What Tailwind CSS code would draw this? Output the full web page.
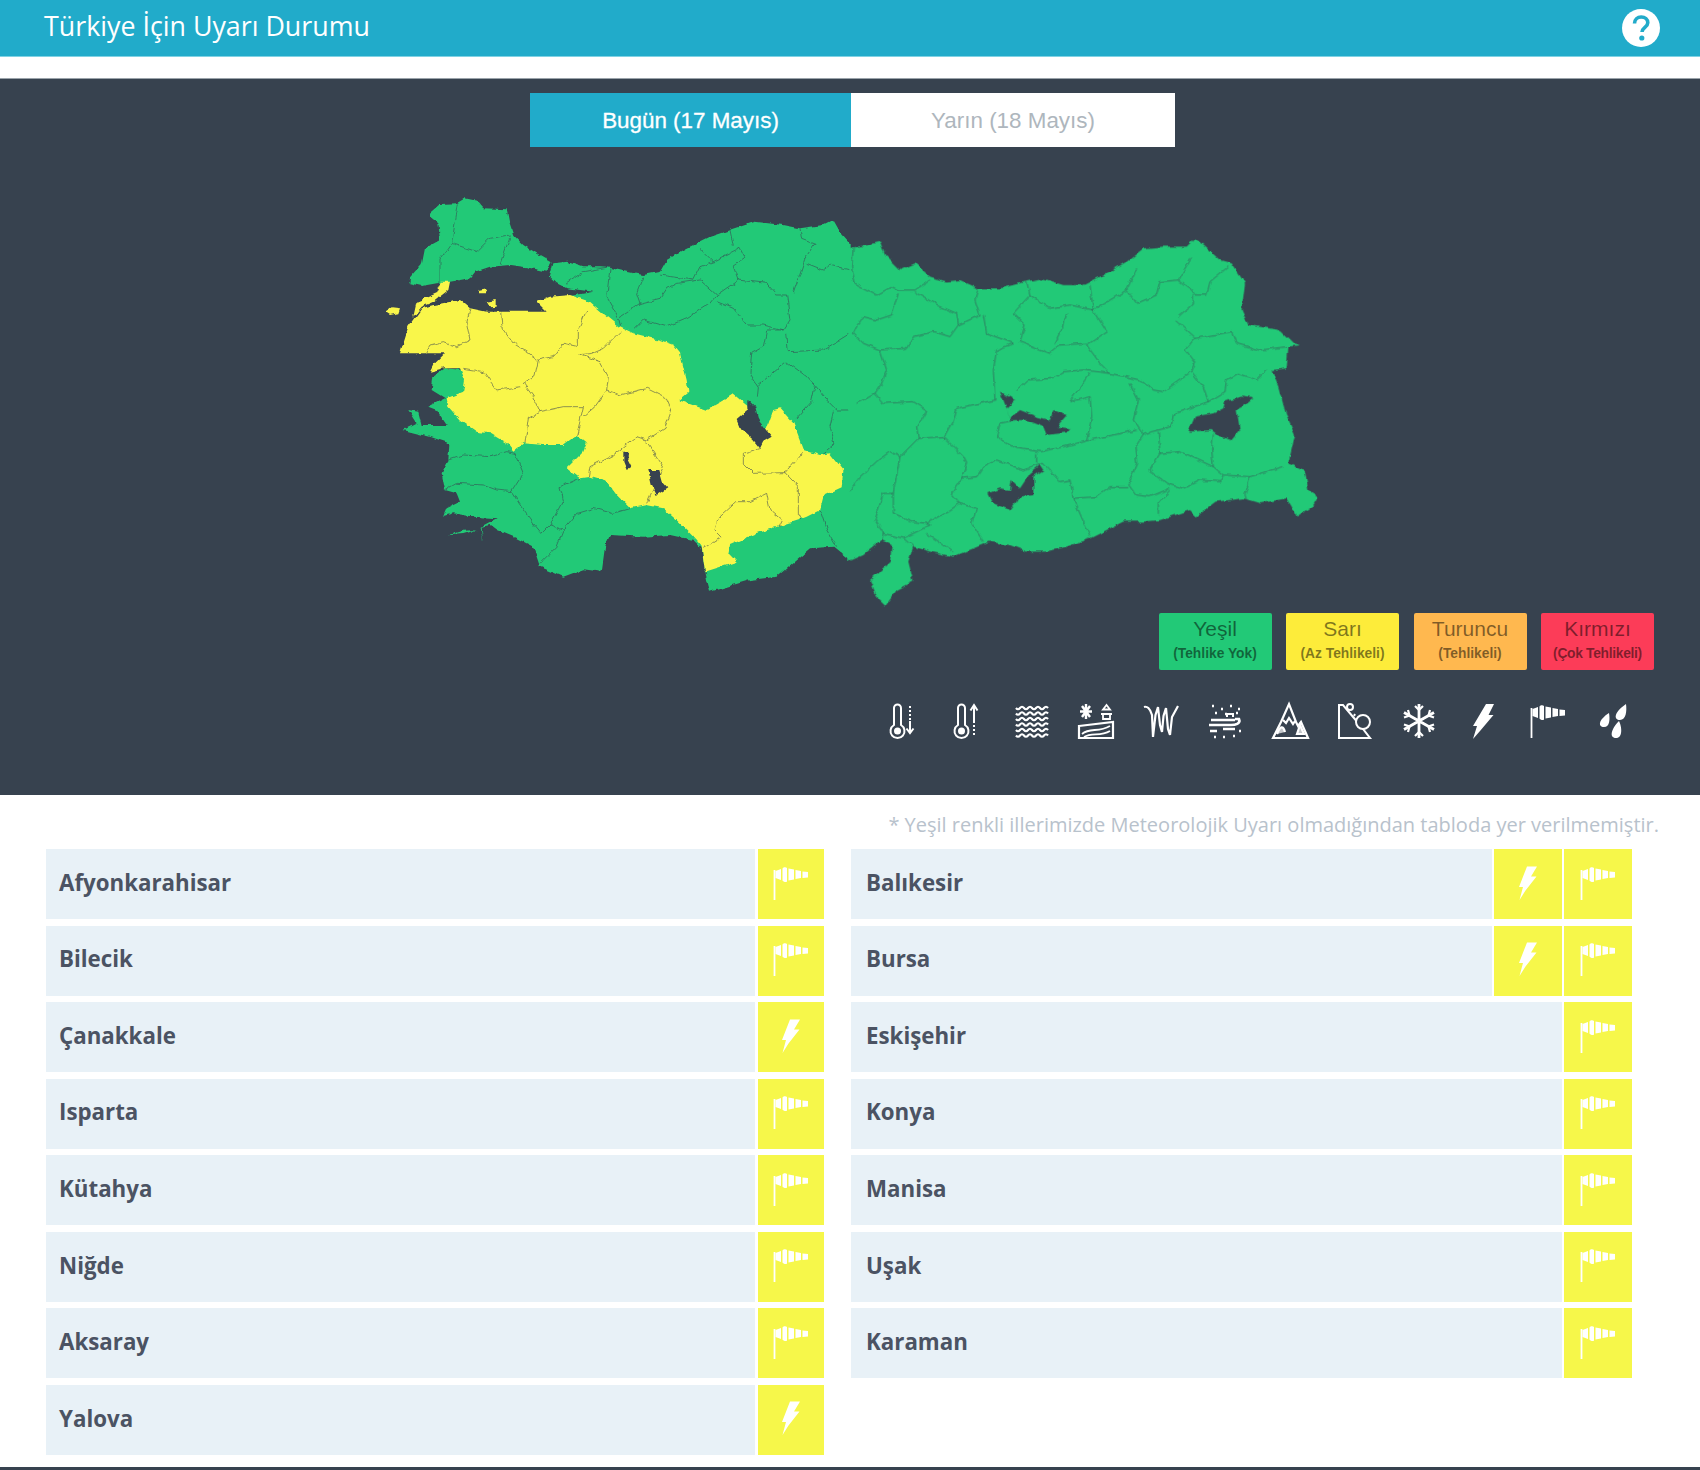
<!DOCTYPE html>
<html lang="tr">

<head>
  <meta charset="UTF-8">
  <title>Türkiye İçin Uyarı Durumu</title>
  <script src="https://cdn.jsdelivr.net/npm/@tailwindcss/browser@4"></script>
</head>

<body class="bg-white font-['Open_Sans',sans-serif]">
  <!-- shared icons -->
  <svg class="hidden">
    <defs>
      <symbol id="wind" viewBox="0 0 36 34">
        <path d="M1.500 34V4" fill="none" stroke="#fff" stroke-width="1.800" />
        <path d="M2.500 5L8 3V14L2.500 12ZM9.500 2.500C10.500 1 13 1 14 2V15.500C13 16.500 10.500 16 9.500 14.500ZM15.500 2.500L21 3.500V13.500L15.500 14.500ZM22.500 4L28 5V12L22.500 13ZM29.500 5.500L35 6V11.500L29.500 12Z" fill="#fff" />
      </symbol>
      <symbol id="bolt" viewBox="0 0 18 34">
        <path d="M8 .5H18L12 10.500H17.500L6.500 24.500L.5 34L4 21H0Z" fill="#fff" />
      </symbol>
      <filter id="rough" filterUnits="userSpaceOnUse" x="350" y="180" width="1000" height="430">
        <feTurbulence type="fractalNoise" baseFrequency=".13" numOctaves="2" seed="4" />
        <feDisplacementMap in="SourceGraphic" scale="5" xChannelSelector="R" yChannelSelector="G" />
      </filter>
    </defs>
  </svg>

  <header class="h-[57px] bg-[#21abca] flex items-center justify-between pl-[44px] pr-[40px] border-b border-[#7fd2e4]">
    <h1 class="text-[26.800px] -mt-[4px] text-white">Türkiye İçin Uyarı Durumu</h1>
    <svg class="w-[38px] h-[38px]" viewBox="0 0 38 38">
      <circle cx="19" cy="19" r="19" fill="#fff" />
      <path d="M12.500 14.500C12.500 10.500 15.500 8 19.200 8C23 8 25.800 10.300 25.800 13.800C25.800 18.300 20 18.500 20 23" fill="none" stroke="#21abca" stroke-width="3.600" />
      <circle cx="19.800" cy="29" r="2.600" fill="#21abca" />
    </svg>
  </header>

  <section class="mt-[21px] h-[717px] bg-[#37424f] border-t border-[#9aa3aa]">
    <div class="mt-[14px] ml-[530px] w-[645px] h-[54px] flex font-['Liberation_Sans',sans-serif] text-[22.400px]">
      <div class="w-[321px] pt-[2px] bg-[#21abca] text-white flex items-center justify-center [-webkit-text-stroke:0.3px_white]">Bugün (17 Mayıs)</div>
      <div class="flex-1 pt-[2px] bg-white text-[#aeb6bd] flex items-center justify-center">Yarın (18 Mayıs)</div>
    </div>

    <!-- map: each half is drawn in its own 3x tracing grid -->
    <svg class="block mt-[33px] ml-[350px] blur-[0.4px]" width="1000" height="430" viewBox="350 180 1000 430">
      <g filter="url(#rough)">
      <g transform="translate(350 180) scale(.33333)">
        <!-- thrace -->
        <path fill="#22c977" d="M240 98L270 72L320 70L345 55L380 62L400 85L470 88L478 130L490 165L520 195L560 220L605 245L590 275L530 262L480 255L420 260L375 275L360 295L300 305L260 310L215 318L178 310L180 295L215 255L225 205L270 180L265 130L240 110Z" />
        <!-- anatolia, west half -->
        <path fill="#22c977" d="M610 250L650 245L700 262L770 262L830 275L880 285L930 275L950 240L1010 205L1080 170L1140 150L1215 125L1300 135L1350 145L1420 135L1450 120L1470 155L1505 195L1505 1145L1450 1100L1380 1105L1280 1190L1200 1200L1080 1235L1065 1175L1055 1105L1030 1080L960 1065L880 1070L780 1065L765 1100L755 1175L700 1168L640 1190L570 1160L550 1100L500 1075L440 1050L420 1035L395 1040L398 1085L392 1040L440 1015L370 1010L310 1000L280 1008L290 985L330 965L320 940L285 930L275 880L295 840L298 790L240 770L160 750L200 730L175 690L205 695L215 735L290 735L260 690L235 680L285 655L245 630L250 590L285 565L340 570L500 500L650 400L700 368L660 348L730 335L650 325L620 310L600 290Z" />
        <path fill="#22c977" d="M296 1066L340 1052L380 1050L340 1062Z" />
        <!-- yellow provinces -->
        <path fill="#f9f64a" d="M720 365L760 400L810 440L850 460L930 480L970 495L990 520L1000 560L1010 600L1015 635L985 660L1070 690L1130 655L1150 642L1195 680L1230 800L1270 690L1290 685L1330 730L1360 810L1410 825L1440 820L1480 870L1475 925L1420 950L1410 990L1370 1010L1345 1020L1220 1060L1140 1095L1135 1120L1160 1145L1065 1175L1055 1100L1030 1070L990 1030L940 985L890 975L840 985L800 945L770 905L720 890L690 895L650 865L700 815L710 790L680 765L640 795L580 795L520 790L490 815L470 790L420 760L380 755L330 720L295 680L290 655L340 635L345 600L330 565L280 565L240 575L250 555L285 520L150 520L175 440L215 385L250 375L330 360L360 385L410 395L590 395L560 365L600 350L660 345Z" />
        <path fill="#f9f64a" d="M190 410L200 365L260 340L275 305L300 305L295 330L250 365L215 380ZM105 395L125 382L150 385L145 400L120 405ZM385 330L410 325L405 340L390 340ZM410 365L440 360L440 380L420 382Z" />
        <!-- lakes -->
        <path fill="#37424f" d="M1195 660L1215 680L1225 720L1265 770L1240 785L1230 805L1210 780L1170 745L1160 720L1195 690ZM895 870L925 870L935 905L952 925L920 945L905 915ZM820 815L835 815L832 835L845 860L830 870L820 845Z" />
        <!-- province lines -->
        <path fill="none" stroke="#37424f" stroke-opacity=".55" stroke-width="3" stroke-linejoin="round" d="M360 385L350 430L360 480L320 500L280 485L240 495L225 520M455 395L460 450L490 490L530 515L565 540L555 590L520 610M710 390L685 450L685 500L640 490L610 530L565 540M810 455L760 505L725 520L685 525M690 525L750 545L775 590L770 630M770 630L810 645L890 625L950 655M520 610L550 650L570 695L640 680L700 680M340 565L400 575L440 630L515 620M570 695L535 715L525 790M700 680L685 745L680 765M770 630L735 680L700 710M950 655L965 690L945 745L890 780L860 770L790 825L720 860L715 890M890 785L940 860L890 970M1230 805L1180 820L1180 850L1210 880L1305 878L1355 820M1305 878L1345 920L1345 1000L1355 1020M1060 1105L1115 1070L1095 1050L1105 1015L1160 965L1200 965L1250 940L1260 990L1295 1020L1285 1040" />
        <path fill="none" stroke="#37424f" stroke-opacity=".55" stroke-width="3" stroke-linejoin="round" d="M325 70L315 130L305 190L270 240L270 310M305 190L380 215L420 175L480 165M480 170L450 255M650 310L700 275L770 262M780 265L770 350L810 420L815 440M880 290L860 340L870 370L810 410M870 370L930 355L950 325L980 310M930 285L1030 300L1050 260L1090 245L1050 205M980 310L1050 300L1100 345M1100 345L1080 370L1010 415L950 440L880 420L850 450M1090 245L1170 205L1185 235L1150 260L1165 300L1100 345M1140 150L1150 200M1165 300L1250 310L1280 345L1310 345L1320 420L1300 450M1100 365L1150 385L1190 435L1240 435L1300 450M1350 145L1355 175L1395 190L1365 235L1330 340M1370 250L1420 270L1440 255L1500 270M1300 450L1250 450L1240 500L1205 520L1200 580L1225 620L1222 650M1315 515L1420 510L1500 460M1315 515L1310 460M1225 615L1310 545L1370 590L1430 660L1460 690L1500 690M1395 620L1385 665L1335 720M1450 695L1440 740L1455 790L1420 820M295 840L340 825L420 830L470 815L495 820M495 820L520 880L485 935L440 930L400 915L320 910L285 930M485 935L520 990L550 1030L575 1060L600 1035L640 960L630 920L690 895M600 1035L640 1050L680 1000L730 985L790 1000L840 985M640 1050L620 1100L570 1150M1065 1175L1075 1230M1410 990L1430 1050L1460 1100" />
      </g>
      <g transform="translate(850 200) scale(.33333)">
        <!-- anatolia, east half -->
        <path fill="#22c977" d="M-5 145L50 135L90 125L105 165L150 210L195 190L240 230L290 245L330 240L385 265L450 265L530 245L575 235L640 255L700 255L760 225L830 185L880 145L940 140L1010 140L1035 115L1060 135L1110 180L1145 190L1185 250L1175 330L1195 375L1290 390L1330 430L1350 435L1315 440L1310 505L1265 510L1285 560L1310 650L1335 705L1315 790L1365 815L1375 870L1405 890L1390 915L1340 950L1325 920L1310 895L1230 910L1180 895L1100 905L1040 950L1020 930L930 960L880 965L820 965L720 1015L650 1040L590 1055L530 1055L480 1035L420 1025L310 1070L240 1055L190 1040L175 1085L190 1145L140 1170L105 1220L85 1200L60 1140L120 1085L125 1035L95 1020L40 1065L-5 1085Z" />
        <!-- dam lakes and van -->
        <path fill="#37424f" d="M450 575L495 600L470 625L478 655L510 630L560 650L600 660L610 630L650 645L620 680L660 685L655 697L590 705L580 680L530 660L480 660L470 625ZM1015 695L1035 650L1090 640L1120 625L1125 605L1175 590L1210 595L1180 620L1160 630L1170 690L1145 720L1110 710L1085 690ZM415 880L450 865L480 870L485 840L510 865L540 820L570 795L580 810L550 830L550 885L510 890L480 930L430 910Z" />
        <!-- province lines -->
        <path fill="none" stroke="#37424f" stroke-opacity=".55" stroke-width="3" stroke-linejoin="round" d="M10 140L5 200L15 250L80 285L125 260L145 270L195 270L240 240M145 280L125 345L80 360L40 350L20 380L10 400M195 275L260 315L320 340L325 375L390 345L375 300L385 265M10 400L40 430L90 450L170 445L190 410L250 395L300 410L325 375M90 450L110 510L95 550L75 580L20 610M75 580L100 610L190 605L230 630L200 680L205 715L150 770M205 715L280 710L340 770L350 790L335 835M400 345L410 400L490 430L440 450L430 510L435 600L320 625L310 665L280 720M530 245L540 285L490 340L525 375L510 425L600 460L630 435L710 430M540 285L600 325L660 315L730 330M720 255L730 330L770 395L710 435L750 490L780 520M650 340L640 380L615 430M730 330L830 270L860 310L920 285L930 245L985 240L1025 170M860 205L830 270M985 240L1025 270L1035 285L1070 285L1080 245L1135 200M985 350L1030 310L1030 285M975 360L1035 415L1145 395L1160 430L1230 450L1310 440M1035 415L1005 450L1035 490L1025 515L940 575L910 570L870 540L780 520L700 510L640 515L610 535L530 540L500 570M1025 515L1060 560L1075 605L975 640L965 680L905 695L880 705L850 660L865 600L840 550M1075 605L1125 575L1130 540L1165 520L1220 540L1250 510M1090 700L1085 750L1090 800L1120 825L1200 830L1300 800M720 520L670 590L660 605L720 590L725 650L710 720M1200 830L1185 885L1190 900M1120 825L1110 845L1050 840L1000 865L950 850L900 810L930 760L990 755L1090 800M925 695L930 760M880 705L855 745L860 790L835 850L860 885L900 890L960 865M960 870L925 910L925 945M835 860L780 860L740 890L670 895L720 1010M670 895L660 840L630 845L580 790M580 790L520 810L440 780L400 800L380 830L335 835L305 880L330 910L300 930L230 970L190 965L130 940L130 880L150 770M860 690L720 720L620 745L570 755L500 745L440 710L450 670L495 660M560 760L560 790M330 910L380 925L365 970L400 1025M230 1000L310 1055M230 970L240 975L160 1015L100 1000L75 960L100 880L130 880M160 1015L190 1040M100 1000L95 1020M150 770L120 755L85 780L30 830L0 870" />
      </g>
      </g>
    </svg>

    <!-- legend -->
    <div class="mt-[3px] pr-[46px] flex justify-end gap-[14.500px] font-['Liberation_Sans',sans-serif] text-center text-black/50">
      <div class="w-[113px] h-[57px] rounded-[2px] bg-[#22c977] pt-[4px]">
        <p class="text-[21px] leading-[24px]">Yeşil</p>
        <p class="text-[13.800px] leading-[26px] font-bold">(Tehlike Yok)</p>
      </div>
      <div class="w-[113px] h-[57px] rounded-[2px] bg-[#fdec3a] pt-[4px]">
        <p class="text-[21px] leading-[24px]">Sarı</p>
        <p class="text-[13.800px] leading-[26px] font-bold">(Az Tehlikeli)</p>
      </div>
      <div class="w-[113px] h-[57px] rounded-[2px] bg-[#ffb84f] pt-[4px]">
        <p class="text-[21px] leading-[24px]">Turuncu</p>
        <p class="text-[13.800px] leading-[26px] font-bold">(Tehlikeli)</p>
      </div>
      <div class="w-[113px] h-[57px] rounded-[2px] bg-[#fc3c58] pt-[4px]">
        <p class="text-[21px] leading-[24px]">Kırmızı</p>
        <p class="text-[13.800px] leading-[26px] font-bold tracking-[-0.3px]">(Çok Tehlikeli)</p>
      </div>
    </div>

    <!-- warning types -->
    <div class="mt-[31px] pr-[68px] flex justify-end gap-[24.500px] blur-[0.4px] text-white">
      <svg class="w-10 h-10" viewBox="0 0 40 40" fill="none" stroke="currentColor" stroke-width="2">
        <path d="M11 7a3.500 3.500 0 0 1 7 0V24a7 7 0 1 1-7 0Z" />
        <circle cx="14.500" cy="30" r="3.500" fill="currentColor" stroke="none" />
        <path d="M27 5V20" stroke-dasharray="2 2" />
        <path d="M27 20V31M23.500 27.500L27 32L30.500 27.500" />
      </svg>
      <svg class="w-10 h-10" viewBox="0 0 40 40" fill="none" stroke="currentColor" stroke-width="2">
        <path d="M11 7a3.500 3.500 0 0 1 7 0V24a7 7 0 1 1-7 0Z" />
        <circle cx="14.500" cy="30" r="3.500" fill="currentColor" stroke="none" />
        <path d="M27 20V34" stroke-dasharray="2 2" />
        <path d="M27 20V5M23.500 9.500L27 4L30.500 9.500" />
      </svg>
      <svg class="w-10 h-10" viewBox="0 0 40 40" fill="none" stroke="currentColor" stroke-width="2.200">
        <path d="M4 7q2 2.500 4 0t4 0t4 0t4 0t4 0t4 0t4 0t4 0M4 12.500q2 2.500 4 0t4 0t4 0t4 0t4 0t4 0t4 0t4 0M4 18q2 2.500 4 0t4 0t4 0t4 0t4 0t4 0t4 0t4 0M4 23.500q2 2.500 4 0t4 0t4 0t4 0t4 0t4 0t4 0t4 0M4 29q2 2.500 4 0t4 0t4 0t4 0t4 0t4 0t4 0t4 0M4 34.500q2 2.500 4 0t4 0t4 0t4 0t4 0t4 0t4 0t4 0" />
      </svg>
      <svg class="w-10 h-10" viewBox="0 0 40 40" fill="none" stroke="currentColor" stroke-width="1.800">
        <path d="M3 25L37 21V37H3Z" stroke-width="2.200" />
        <path d="M6 33C14 26 22 32 34 25M8 36C16 31 24 36 34 30" />
        <path d="M6 5L14 16M14 5L6 16M10 3V18M4 10.500H16" stroke-width="2.400" />
        <path d="M25 13H36M27 13V18H34V13M30.500 4L27 8.500H34Z" />
      </svg>
      <svg class="w-10 h-10" viewBox="0 0 40 40" fill="none" stroke="currentColor" stroke-width="2.200">
        <path d="M3 6C6 5 9 7 11 14L12 36L14.500 14L17 6L19 24L21 31L22.500 15L25 7L27 28L29 34L31 16L37 5" />
      </svg>
      <svg class="w-10 h-10" viewBox="0 0 40 40" fill="none" stroke="currentColor" stroke-width="2">
        <path d="M6 19H30M4 24H26C30 24 36 23 34 18H30" stroke-width="2.600" />
        <path d="M5 30H12M18 28H30M7 5H9M16 8H18M25 5H27M33 8H35M10 12H12M20 13H22M31 12H33M9 36H11M18 36H20M28 35H30M34 30H36" stroke-width="2.600" />
        <path d="M22 16V13H28V16" />
      </svg>
      <svg class="w-10 h-10" viewBox="0 0 40 40" fill="none" stroke="currentColor" stroke-width="2.200">
        <path d="M3 37L11 21L19 3L26 21L28 25L31 21L38 37Z" />
        <path d="M13 19L16 22L19 17L23 23L25 20" />
        <path d="M7 33C10 25 13 24 15 31" fill="currentColor" fill-opacity=".7" />
        <path d="M27 33L30 24L34 33Z" fill="currentColor" fill-opacity=".7" />
      </svg>
      <svg class="w-10 h-10" viewBox="0 0 40 40" fill="none" stroke="currentColor" stroke-width="2">
        <path d="M5 4V37H36L25 23L9 4Z" />
        <circle cx="29" cy="21" r="7" fill="#37424f" />
        <circle cx="16" cy="6" r="3" />
        <path d="M21 13L20 15" />
      </svg>
      <svg class="w-10 h-10" viewBox="0 0 40 40" fill="none" stroke="currentColor" stroke-width="2.200">
        <path d="M20 3V37M5 11.500L35 28.500M35 11.500L5 28.500" stroke-width="2.800" />
        <path d="M16 5L20 9L24 5M16 35L20 31L24 35M5 16.500L10.500 14.500L9 9M35 23.500L29.500 25.500L31 31M35 16.500L29.500 14.500L31 9M5 23.500L10.500 25.500L9 31" />
      </svg>
      <svg class="w-10 h-10" viewBox="0 0 40 40">
        <path d="M23 3H31L25.500 14H30.500L17 30L10 38L14 25H10Z" fill="currentColor" />
      </svg>
      <svg class="w-10 h-10" viewBox="0 0 40 40">
        <use href="#wind" x="2" y="3" width="36" height="34" />
      </svg>
      <svg class="w-10 h-10" viewBox="0 0 40 40" fill="currentColor">
        <path d="M34 3C35 10 34 19 28 19C22 19 21 12 34 3ZM17 12C18 18 18 26 12 26C6 26 6 19 17 12ZM27 20C30 26 31 37 24 37C17 37 19 28 27 20Z" />
      </svg>
    </div>
  </section>

  <p class="pt-[16px] h-[54px] pr-[41px] text-right text-[20px] leading-[28px] text-[#b8c2cc]">* Yeşil renkli illerimizde Meteorolojik Uyarı olmadığından tabloda yer verilmemiştir.</p>

  <div class="ml-[46px] grid grid-cols-[778px_781px] gap-x-[27px] gap-y-[6.570px] auto-rows-[70px] text-[22.300px] font-bold text-[#4b5363]">
    <div class="flex gap-[3px]">
      <div class="flex-1 bg-[#e8f1f7] flex items-center pl-[13px] pb-[3px]">Afyonkarahisar</div>
      <div class="w-[66px] bg-[#f6f74a] flex items-center justify-center"><svg class="w-[36px] h-[34px] -mt-[3px]"><use href="#wind" /></svg></div>
    </div>
    <div class="flex gap-[2px]">
      <div class="flex-1 bg-[#e8f1f7] flex items-center pl-[15px] pb-[3px]">Balıkesir</div>
      <div class="w-[68px] bg-[#f6f74a] flex items-center justify-center"><svg class="w-[18px] h-[34px] -mt-[3px]"><use href="#bolt" /></svg></div>
      <div class="w-[68px] bg-[#f6f74a] flex items-center justify-center"><svg class="w-[36px] h-[34px] -mt-[3px]"><use href="#wind" /></svg></div>
    </div>
    <div class="flex gap-[3px]">
      <div class="flex-1 bg-[#e8f1f7] flex items-center pl-[13px] pb-[3px]">Bilecik</div>
      <div class="w-[66px] bg-[#f6f74a] flex items-center justify-center"><svg class="w-[36px] h-[34px] -mt-[3px]"><use href="#wind" /></svg></div>
    </div>
    <div class="flex gap-[2px]">
      <div class="flex-1 bg-[#e8f1f7] flex items-center pl-[15px] pb-[3px]">Bursa</div>
      <div class="w-[68px] bg-[#f6f74a] flex items-center justify-center"><svg class="w-[18px] h-[34px] -mt-[3px]"><use href="#bolt" /></svg></div>
      <div class="w-[68px] bg-[#f6f74a] flex items-center justify-center"><svg class="w-[36px] h-[34px] -mt-[3px]"><use href="#wind" /></svg></div>
    </div>
    <div class="flex gap-[3px]">
      <div class="flex-1 bg-[#e8f1f7] flex items-center pl-[13px] pb-[3px]">Çanakkale</div>
      <div class="w-[66px] bg-[#f6f74a] flex items-center justify-center"><svg class="w-[18px] h-[34px] -mt-[3px]"><use href="#bolt" /></svg></div>
    </div>
    <div class="flex gap-[2px]">
      <div class="flex-1 bg-[#e8f1f7] flex items-center pl-[15px] pb-[3px]">Eskişehir</div>
      <div class="w-[68px] bg-[#f6f74a] flex items-center justify-center"><svg class="w-[36px] h-[34px] -mt-[3px]"><use href="#wind" /></svg></div>
    </div>
    <div class="flex gap-[3px]">
      <div class="flex-1 bg-[#e8f1f7] flex items-center pl-[13px] pb-[3px]">Isparta</div>
      <div class="w-[66px] bg-[#f6f74a] flex items-center justify-center"><svg class="w-[36px] h-[34px] -mt-[3px]"><use href="#wind" /></svg></div>
    </div>
    <div class="flex gap-[2px]">
      <div class="flex-1 bg-[#e8f1f7] flex items-center pl-[15px] pb-[3px]">Konya</div>
      <div class="w-[68px] bg-[#f6f74a] flex items-center justify-center"><svg class="w-[36px] h-[34px] -mt-[3px]"><use href="#wind" /></svg></div>
    </div>
    <div class="flex gap-[3px]">
      <div class="flex-1 bg-[#e8f1f7] flex items-center pl-[13px] pb-[3px]">Kütahya</div>
      <div class="w-[66px] bg-[#f6f74a] flex items-center justify-center"><svg class="w-[36px] h-[34px] -mt-[3px]"><use href="#wind" /></svg></div>
    </div>
    <div class="flex gap-[2px]">
      <div class="flex-1 bg-[#e8f1f7] flex items-center pl-[15px] pb-[3px]">Manisa</div>
      <div class="w-[68px] bg-[#f6f74a] flex items-center justify-center"><svg class="w-[36px] h-[34px] -mt-[3px]"><use href="#wind" /></svg></div>
    </div>
    <div class="flex gap-[3px]">
      <div class="flex-1 bg-[#e8f1f7] flex items-center pl-[13px] pb-[3px]">Niğde</div>
      <div class="w-[66px] bg-[#f6f74a] flex items-center justify-center"><svg class="w-[36px] h-[34px] -mt-[3px]"><use href="#wind" /></svg></div>
    </div>
    <div class="flex gap-[2px]">
      <div class="flex-1 bg-[#e8f1f7] flex items-center pl-[15px] pb-[3px]">Uşak</div>
      <div class="w-[68px] bg-[#f6f74a] flex items-center justify-center"><svg class="w-[36px] h-[34px] -mt-[3px]"><use href="#wind" /></svg></div>
    </div>
    <div class="flex gap-[3px]">
      <div class="flex-1 bg-[#e8f1f7] flex items-center pl-[13px] pb-[3px]">Aksaray</div>
      <div class="w-[66px] bg-[#f6f74a] flex items-center justify-center"><svg class="w-[36px] h-[34px] -mt-[3px]"><use href="#wind" /></svg></div>
    </div>
    <div class="flex gap-[2px]">
      <div class="flex-1 bg-[#e8f1f7] flex items-center pl-[15px] pb-[3px]">Karaman</div>
      <div class="w-[68px] bg-[#f6f74a] flex items-center justify-center"><svg class="w-[36px] h-[34px] -mt-[3px]"><use href="#wind" /></svg></div>
    </div>
    <div class="flex gap-[3px]">
      <div class="flex-1 bg-[#e8f1f7] flex items-center pl-[13px] pb-[3px]">Yalova</div>
      <div class="w-[66px] bg-[#f6f74a] flex items-center justify-center"><svg class="w-[18px] h-[34px] -mt-[3px]"><use href="#bolt" /></svg></div>
    </div>
  </div>

  <div class="mt-[12px] h-[3px] bg-[#37424f]"></div>
</body>

</html>
